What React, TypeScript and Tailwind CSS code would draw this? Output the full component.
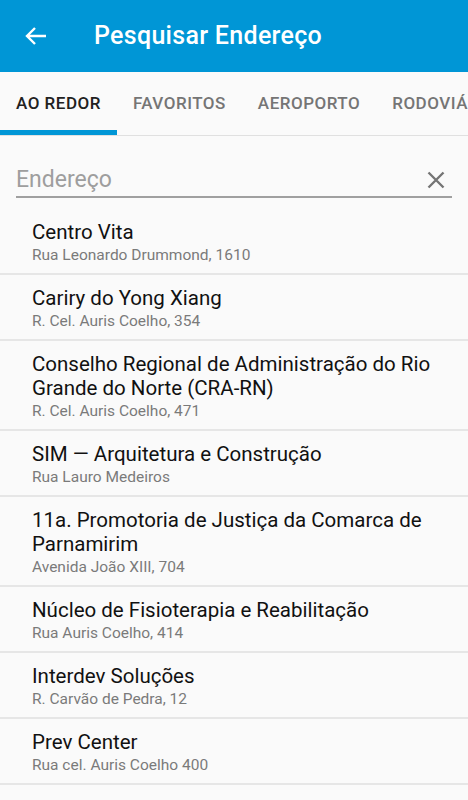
const places = [
  { name: "Centro Vita", address: "Rua Leonardo Drummond, 1610" },
  { name: "Cariry do Yong Xiang", address: "R. Cel. Auris Coelho, 354" },
  {
    name: "Conselho Regional de Administração do Rio Grande do Norte (CRA-RN)",
    address: "R. Cel. Auris Coelho, 471",
  },
  { name: "SIM — Arquitetura e Construção", address: "Rua Lauro Medeiros" },
  {
    name: "11a. Promotoria de Justiça da Comarca de Parnamirim",
    address: "Avenida João XIII, 704",
  },
  { name: "Núcleo de Fisioterapia e Reabilitação", address: "Rua Auris Coelho, 414" },
  { name: "Interdev Soluções", address: "R. Carvão de Pedra, 12" },
  { name: "Prev Center", address: "Rua cel. Auris Coelho 400" },
];

const tabs = ["AO REDOR", "FAVORITOS", "AEROPORTO", "RODOVIÁRIA"];

export default function App() {
  return (
    <div className="w-[468px] h-[800px] overflow-hidden bg-[#fafafa] font-['Roboto',sans-serif]">
      <header className="h-[72px] bg-[#0096d6] flex items-center">
        <svg width="22" height="20" viewBox="0 0 22 20" className="ml-[25px]" fill="none">
          <path d="M21 10H2M10 2L2 10l8 8" stroke="#fff" strokeWidth="2.4" />
        </svg>
        <h1 className="ml-[47px] text-white text-[25px] font-medium tracking-[0.3px]">
          Pesquisar Endereço
        </h1>
      </header>

      {/* tabs scroll sideways on the device, last one is cut by the edge */}
      <nav className="h-[64px] flex border-b border-[#e0e0e0] whitespace-nowrap overflow-hidden">
        {tabs.map((t, i) => (
          <div
            key={t}
            className={
              i === 0
                ? "shrink-0 px-4 flex items-center text-[17px] tracking-[0.5px] font-medium text-[#212121] border-b-[5px] border-[#0096d6] pt-[5px]"
                : "shrink-0 px-4 flex items-center text-[17px] tracking-[0.5px] font-medium text-[#757575]"
            }
          >
            {t}
          </div>
        ))}
      </nav>

      <div className="mx-4 mt-[28px] h-[34px] border-b-2 border-[#a0a0a0] flex items-center justify-between">
        <span className="text-[23px] text-[#9e9e9e]">Endereço</span>
        <svg width="18" height="18" viewBox="0 0 18 18" className="mr-[7px]" fill="none">
          <path d="M1.5 1.5l15 15M16.5 1.5l-15 15" stroke="#757575" strokeWidth="2.4" />
        </svg>
      </div>

      <ul className="mt-[11px]">
        {places.map((p) => (
          <li key={p.name} className="pl-8 pr-4 pt-[11px] pb-[7px] border-b-2 border-[#e6e6e6]">
            <p className="text-[20.5px] leading-[24px] text-[#111]">{p.name}</p>
            <p className="text-[15.5px] leading-[22px] text-[#7a7a7a]">{p.address}</p>
          </li>
        ))}
      </ul>
    </div>
  );
}
